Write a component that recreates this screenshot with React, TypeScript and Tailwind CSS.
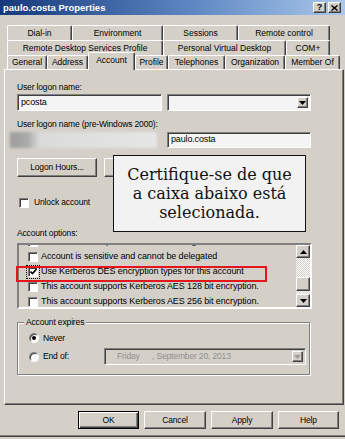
import React from "react";

const raised =
  "border border-t-white border-l-white border-r-[#404040] border-b-[#404040] shadow-[inset_-1px_-1px_#808080]";
const sunken =
  "border border-t-[#808080] border-l-[#808080] border-r-white border-b-white shadow-[inset_1px_1px_#404040]";
const ui = "font-['Liberation_Sans',Arial,sans-serif]";

function Tab({ label, w, active }: { label: string; w: string; active?: boolean }) {
  return (
    <div
      className={`${w} ${
        active ? "h-[18px] mb-[-1px] relative z-10 pb-[3px]" : "h-full"
      } flex items-center justify-center whitespace-nowrap bg-[#d4d0c8] rounded-t-[2px] border-t border-l border-r border-t-white border-l-white border-r-[#404040] shadow-[inset_-1px_0_#808080]`}
    >
      {label}
    </div>
  );
}

function Arrow({ down = true, color = "#000" }: { down?: boolean; color?: string }) {
  return (
    <svg width="7" height="4" viewBox="0 0 7 4">
      <path d={down ? "M0 0h7L3.5 4z" : "M0 4h7L3.5 0z"} fill={color} />
    </svg>
  );
}

function Check({ checked }: { checked?: boolean }) {
  return (
    <div className={`w-[10px] h-[10px] shrink-0 bg-white flex items-center justify-center ${sunken}`}>
      {checked && (
        <svg width="7" height="7" viewBox="0 0 7 7">
          <path d="M0.5 3.5l2 2 4-4.5" stroke="#000" strokeWidth="1.6" fill="none" />
        </svg>
      )}
    </div>
  );
}

function Radio({ on }: { on?: boolean }) {
  return (
    <div className="w-[10px] h-[10px] shrink-0 rounded-full bg-white border border-t-[#808080] border-l-[#808080] border-r-white border-b-white shadow-[inset_1px_1px_#404040] flex items-center justify-center">
      {on && <div className="w-[4px] h-[4px] rounded-full bg-black" />}
    </div>
  );
}

function Btn({ label, w, def }: { label: string; w: string; def?: boolean }) {
  return (
    <div
      className={`${w} h-full flex items-center justify-center ${
        def
          ? "border border-black shadow-[inset_1px_1px_white,inset_-1px_-1px_#404040,inset_-2px_-2px_#808080]"
          : raised
      }`}
    >
      {label}
    </div>
  );
}

const items = [
  { t: "Smart card is required for interactive logon" },
  { t: "Account is sensitive and cannot be delegated" },
  { t: "Use Kerberos DES encryption types for this account", c: true },
  { t: "This account supports Kerberos AES 128 bit encryption." },
  { t: "This account supports Kerberos AES 256 bit encryption." },
];

export default function App() {
  return (
    <div className={`w-[345px] h-[439px] bg-[#d4d0c8] overflow-hidden relative flex flex-col text-[8.5px] tracking-[-0.15px] text-black ${ui}`}>
      {/* title bar */}
      <div className="h-[15px] shrink-0 flex items-center justify-between pl-[3px] pr-[4px] bg-[linear-gradient(90deg,#15397a,#5d86c2_55%,#a9c8ea)]">
        <span className="text-white font-bold text-[9.5px] tracking-normal leading-none">paulo.costa Properties</span>
        <div className="flex gap-[2px]">
          <div className={`w-[13px] h-[11px] bg-[#d4d0c8] flex items-center justify-center text-[9px] font-bold leading-none ${raised}`}>?</div>
          <div className={`w-[13px] h-[11px] bg-[#d4d0c8] flex items-center justify-center ${raised}`}>
            <svg width="7" height="6" viewBox="0 0 7 6">
              <path d="M0.5 0.5l6 5M6.5 0.5l-6 5" stroke="#000" strokeWidth="1.5" />
            </svg>
          </div>
        </div>
      </div>

      {/* tabs */}
      <div className="mt-[10px] flex flex-col tracking-normal">
        <div className="flex h-[15px] ml-[7px]">
          <Tab label="Dial-in" w="w-[65px]" />
          <Tab label="Environment" w="w-[91px]" />
          <Tab label="Sessions" w="w-[75px]" />
          <Tab label="Remote control" w="w-[92px]" />
        </div>
        <div className="flex h-[15px] ml-[7px]">
          <Tab label="Remote Desktop Services Profile" w="w-[156px]" />
          <Tab label="Personal Virtual Desktop" w="w-[123px]" />
          <Tab label="COM+" w="w-[44px]" />
        </div>
        <div className="flex items-end h-[14px] ml-[7px]">
          <Tab label="General" w="w-[40px]" />
          <Tab label="Address" w="w-[41px]" />
          <Tab label="Account" w="w-[47px]" active />
          <Tab label="Profile" w="w-[33px]" />
          <Tab label="Telephones" w="w-[57px]" />
          <Tab label="Organization" w="w-[60px]" />
          <Tab label="Member Of" w="w-[55px]" />
        </div>
      </div>

      {/* panel */}
      <div className={`ml-[4px] w-[340px] h-[336px] shrink-0 flex flex-col pl-[12px] ${raised}`}>
        <div className="mt-[11px] h-[12px] leading-[12px]">User logon name:</div>
        <div className="mt-[1px] h-[17px] flex gap-[5px]">
          <div className={`w-[145px] h-full bg-[#f4f4f4] flex items-center pl-[3px] text-[9px] ${sunken}`}>pcosta</div>
          <div className={`w-[144px] h-full bg-[#f4f4f4] flex items-center justify-end pr-[2px] ${sunken}`}>
            <div className={`w-[11px] h-[11px] bg-[#d4d0c8] flex items-center justify-center ${raised}`}>
              <Arrow />
            </div>
          </div>
        </div>

        <div className="mt-[7px] h-[12px] leading-[12px]">User logon name (pre-Windows 2000):</div>
        <div className="mt-[2px] h-[16px] flex gap-[10px] ml-[-7px]">
          <div className="w-[147px] h-full blur-[1.5px] bg-[linear-gradient(90deg,#9c9c9c_0%,#aaaaaa_12%,#dadada_20%,#e6e6e6_100%)]" />
          <div className={`w-[144px] h-full bg-[#f4f4f4] flex items-center pl-[3px] text-[9px] ${sunken}`}>paulo.costa</div>
        </div>

        <div className="mt-[10px] h-[19px] flex gap-[7px]">
          <Btn label="Logon Hours..." w="w-[80px]" />
          <Btn label="Log On To..." w="w-[80px]" />
        </div>

        <div className="mt-[19px] h-[13px] flex items-center gap-[5px] ml-[2px]">
          <Check />
          <span>Unlock account</span>
        </div>

        <div className="mt-[18px] h-[12px] leading-[12px]">Account options:</div>

        {/* options list */}
        <div className="relative mt-[4px] w-[295px] h-[66px] shrink-0 flex bg-[#d4d0c8] border-2 border-t-[#808080] border-l-[#808080] border-r-white border-b-white">
          <div className="flex-1 overflow-hidden text-[9px] tracking-[-0.1px]">
            <div className="mt-[-11px] flex flex-col">
              {items.map((it) => (
                <div key={it.t} className="h-[15px] flex items-center gap-[2px] pl-[9px] whitespace-nowrap">
                  <div className={it.c ? "outline-1 outline-dotted outline-black outline-offset-[1px]" : ""}>
                    <Check checked={it.c} />
                  </div>
                  <span className="ml-[1px]">{it.t}</span>
                </div>
              ))}
            </div>
          </div>
          <div className="w-[14px] flex flex-col">
            <div className={`h-[13px] bg-[#d4d0c8] flex items-center justify-center ${raised}`}>
              <Arrow down={false} />
            </div>
            <div className="h-[19px] bg-[repeating-conic-gradient(#ffffff_0_25%,#d4d0c8_0_50%)] bg-[length:2px_2px]" />
            <div className={`h-[14px] bg-[#d4d0c8] ${raised}`} />
            <div className="h-[3px] bg-[repeating-conic-gradient(#ffffff_0_25%,#d4d0c8_0_50%)] bg-[length:2px_2px]" />
            <div className={`h-[13px] bg-[#d4d0c8] flex items-center justify-center ${raised}`}>
              <Arrow />
            </div>
          </div>
          {/* highlight */}
          <div className="absolute left-[-3px] top-[21px] w-[251px] h-[16px] border-2 border-[#e3161d]" />
        </div>

        {/* account expires */}
        <div className="relative mt-[13px] w-[293px] h-[53px] border border-[#808080] shadow-[1px_1px_0_white,inset_1px_1px_0_white] flex flex-col pl-[11px]">
          <span className="absolute left-[6px] top-[-7px] px-[2px] bg-[#d4d0c8] leading-[12px]">Account expires</span>
          <div className="mt-[9px] h-[12px] flex items-center gap-[4px]">
            <Radio on />
            <span>Never</span>
          </div>
          <div className="mt-[4px] h-[17px] flex items-center gap-[4px]">
            <Radio />
            <span className="w-[57px]">End of:</span>
            <div className={`w-[202px] h-full bg-[#d4d0c8] flex items-center text-[#8f8f8f] pr-[2px] ${sunken}`}>
              <span className="ml-[12px] w-[35px]">Friday</span>
              <span>, September 20, 2013</span>
              <div className={`ml-auto w-[11px] h-[11px] flex items-center justify-center ${raised}`}>
                <Arrow color="#9a9a9a" />
              </div>
            </div>
          </div>
        </div>
      </div>

      {/* dialog buttons */}
      <div className="mt-[6px] h-[18px] flex justify-end gap-[5px] pr-[6px]">
        <Btn label="OK" w="w-[61px]" def />
        <Btn label="Cancel" w="w-[62px]" />
        <Btn label="Apply" w="w-[62px]" />
        <Btn label="Help" w="w-[61px]" />
      </div>
      <div className="mt-[6px] h-px bg-[#808080]" />
      <div className="h-px bg-[#404040]" />

      {/* callout */}
      <div className="absolute left-[113px] top-[155px] w-[193px] h-[77px] bg-[#f2f2f2] border-[1.5px] border-[#111] flex flex-col items-center justify-center font-['DejaVu_Serif',serif] text-[16px] leading-[19px] tracking-normal text-[#111]">
        <span>Certifique-se de que</span>
        <span>a caixa abaixo está</span>
        <span>selecionada.</span>
      </div>
    </div>
  );
}
